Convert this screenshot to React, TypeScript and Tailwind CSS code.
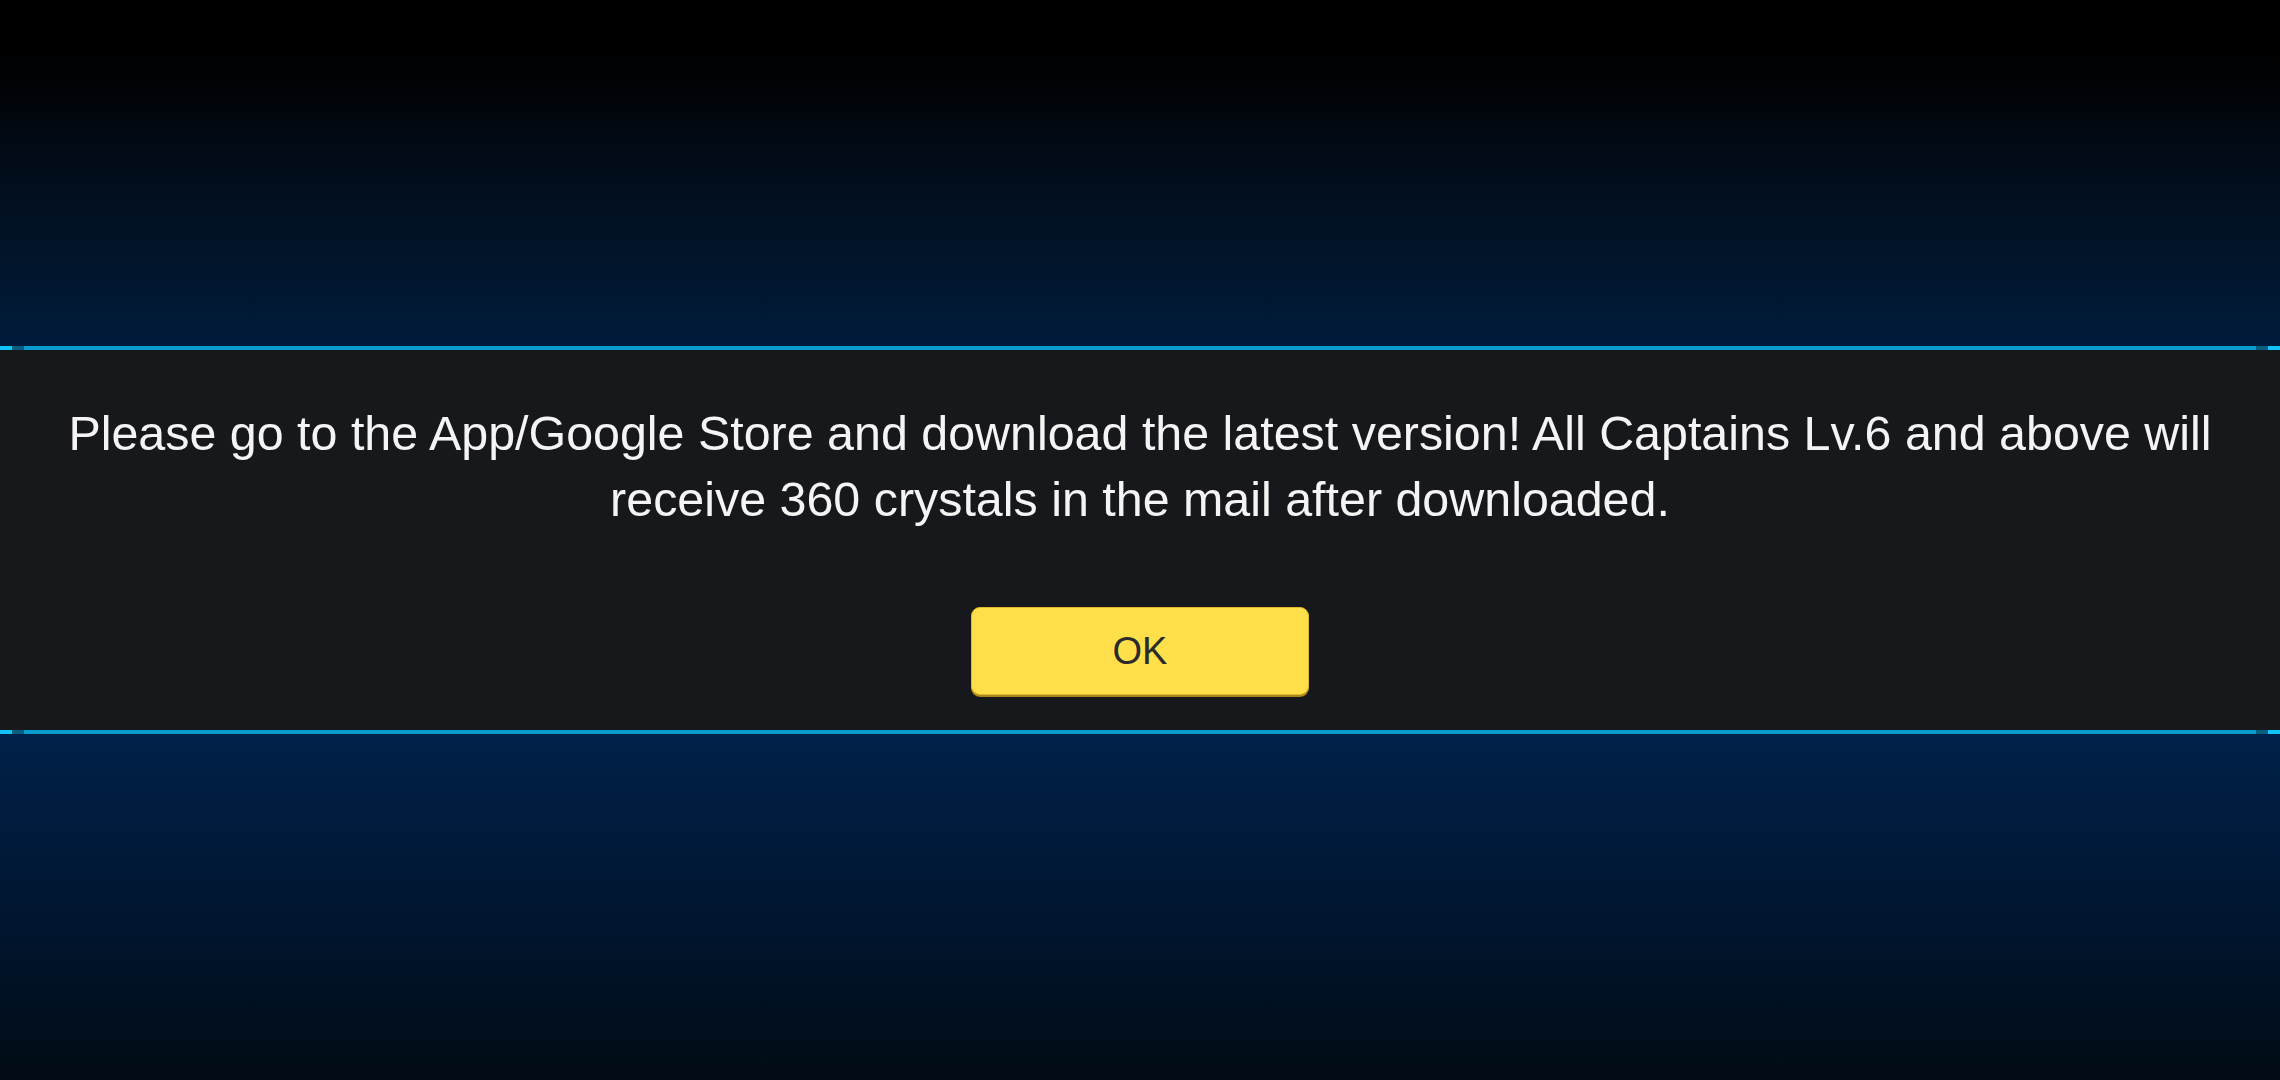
export default function App() {
  return (
    <div className="w-[2280px] h-[1080px] flex flex-col overflow-hidden font-['Liberation_Sans',Arial,sans-serif]">
      {/* upper backdrop */}
      <div className="flex-1 bg-gradient-to-b from-[#000000] via-[#020a14] via-40% to-[#001c3c]" />

      {/* top rule */}
      <Rule />

      {/* dialog band */}
      <div className="bg-[#16181b] flex flex-col items-center pt-[50px] pb-[35px]">
        <p className="w-[2200px] text-center text-[#f4f4f4] text-[48.4px] leading-[66px]">
          Please go to the App/Google Store and download the latest version! All Captains Lv.6 and above will receive 360 crystals in the mail after downloaded.
        </p>
        <button className="mt-[75px] w-[338px] h-[88px] rounded-[9px] bg-[#ffe04a] border border-[#e0b92a] shadow-[0_2px_0_#a8861a] text-[#2b2b2b] text-[38px] flex items-center justify-center">
          OK
        </button>
      </div>

      {/* bottom rule */}
      <Rule />

      {/* lower backdrop */}
      <div className="flex-1 bg-gradient-to-b from-[#00214a] via-[#00142c] via-60% to-[#010b14]" />
    </div>
  );
}

function Rule() {
  return (
    <div className="h-[4px] flex bg-[#0b1d2e]">
      <div className="w-[12px] bg-[#12c4f5]" />
      <div className="w-[12px] bg-[#0a5f80]" />
      <div className="flex-1 bg-[#0a9ccc]" />
      <div className="w-[12px] bg-[#0a5f80]" />
      <div className="w-[12px] bg-[#12c4f5]" />
    </div>
  );
}
